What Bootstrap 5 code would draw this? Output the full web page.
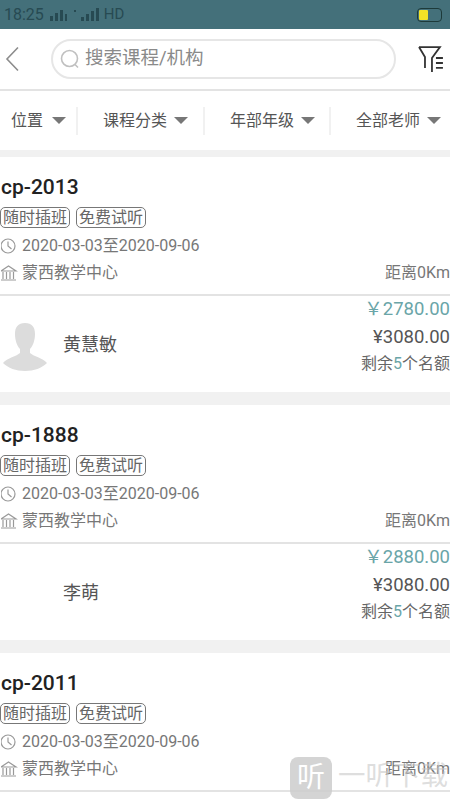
<!DOCTYPE html>
<html lang="zh">

<head>
    <meta charset="UTF-8">
    <meta name="viewport" content="width=device-width, initial-scale=1.0">
    <title>课程列表</title>
    <link href="https://cdn.jsdelivr.net/npm/bootstrap@5.3.0/dist/css/bootstrap.min.css" rel="stylesheet">
    <style>
        html, body {
            height: 800px;
            overflow: hidden;
        }

        body {
            background-color: #f1f1f1;
            color: #444;
            font-family: Roboto, "Noto Sans CJK SC", sans-serif;
        }

        .status-bar {
            height: 29px;
            background-color: #44707a;
            color: #274a52;
            font-size: 16px;
            padding: 0 8px 0 4px;
        }

        .status-hd { font-size: 15px; }

        .battery {
            width: 25px;
            height: 14px;
            border: 1.5px solid #1d3a3a;
            border-radius: 4px;
            padding: 1px;
        }

        .battery-fill {
            width: 9px;
            height: 100%;
            background-color: #f2e227;
            border-radius: 1px;
        }

        .top-bar {
            height: 62px;
            background-color: #fff;
            border-bottom: 2px solid #e3e3e3;
            padding: 0 5px 0 5px;
        }

        .search-box {
            width: 346px;
            height: 40px;
            margin-left: 32px;
            margin-right: 21px;
            border: 2px solid #e6e6e6;
            border-radius: 20px;
            padding-left: 6px;
            color: #8a8a8a;
            font-size: 18.5px;
        }

        .filter-bar {
            height: 59px;
            background-color: #fff;
            margin-bottom: 7px;
            font-size: 16px;
            color: #555;
        }

        .filter-item {
            height: 28px;
            border-right: 2px solid #f1f1f1;
            gap: 7px;
            padding-left: 25px;
            white-space: nowrap;
        }

        .filter-item:last-child { border-right: 0; }

        .filter-place { width: 78px; padding-left: 11px; gap: 9px; }
        .filter-type { width: 127px; }
        .filter-grade { width: 126px; }
        .filter-teacher { width: 119px; }

        .caret-down {
            width: 0;
            height: 0;
            border-left: 7px solid transparent;
            border-right: 7px solid transparent;
            border-top: 7px solid #777;
        }

        .course-item {
            height: 235px;
            background-color: #fff;
            margin-bottom: 13px;
        }

        .course-top {
            height: 139px;
            border-bottom: 2px solid #e3e3e3;
            padding: 17px 0 0 1px;
        }

        .course-name {
            font-size: 21px;
            font-weight: 500;
            line-height: 27px;
            color: #222;
            margin: 0;
        }

        .tag-row {
            gap: 6px;
            margin-top: 6px;
            margin-left: -1px;
            height: 21px;
        }

        .course-tag {
            border: 1px solid #777;
            border-radius: 5px;
            font-size: 16px;
            line-height: 19px;
            padding: 0 2px;
            color: #666;
        }

        .info-row {
            height: 27px;
            font-size: 16px;
            color: #777;
            gap: 4px;
        }

        .info-row.first-info { margin-top: 4px; }

        .distance { margin-left: auto; }

        .course-bottom {
            height: 96px;
        }

        .avatar-slot {
            width: 63px;
            padding-left: 3px;
            height: 48px;
            margin-top: 6px;
        }

        .teacher-name {
            font-size: 18px;
            color: #555;
        }

        .price-col {
            margin-left: auto;
            text-align: right;
            height: 96px;
        }

        .price-now {
            font-size: 18.5px;
            line-height: 26px;
            color: #6aa5a8;
        }

        .price-old {
            font-size: 18.5px;
            line-height: 30px;
            color: #555;
        }

        .seats {
            font-size: 16px;
            line-height: 24px;
            color: #666;
        }

        .seats span { color: #6aa5a8; }

        .watermark {
            position: absolute;
            left: 290px;
            top: 757px;
            gap: 6px;
            pointer-events: none;
        }

        .watermark-logo {
            width: 42px;
            height: 42px;
            background-color: rgba(205, 205, 205, 0.85);
            border-radius: 8px;
            color: #fff;
            font-size: 28px;
            line-height: 1;
        }

        .watermark-text {
            font-size: 27.5px;
            line-height: 38px;
            color: rgba(200, 200, 200, 0.6);
            white-space: nowrap;
        }
    </style>
</head>

<body>

    <!-- status bar -->
    <div class="status-bar d-flex align-items-center">
        <span>18:25</span>
        <svg class="ms-1" width="22" height="15" viewBox="0 0 22 15" fill="#274a52">
            <rect x="2" y="9" width="3" height="5"/><rect x="7" y="6" width="3" height="8"/><rect x="12" y="3" width="3" height="11"/><rect x="17" y="7" width="2" height="7"/>
        </svg>
        <svg class="ms-1" width="30" height="15" viewBox="0 0 30 15" fill="#274a52">
            <rect x="0" y="3" width="2" height="2"/><rect x="7" y="10" width="3" height="4"/><rect x="12" y="7" width="3" height="7"/><rect x="17" y="4" width="3" height="10"/><rect x="22" y="1" width="3" height="13"/>
        </svg>
        <span class="status-hd">HD</span>
        <div class="battery ms-auto"><div class="battery-fill"></div></div>
    </div>

    <!-- header -->
    <div class="top-bar d-flex align-items-center">
        <svg width="14" height="26" viewBox="0 0 14 26" fill="none" stroke="#8c8c8c" stroke-width="1.6">
            <path d="M13 1.5 2 13l11 11.5"/>
        </svg>
        <div class="search-box d-flex align-items-center">
            <svg class="me-1" width="22" height="22" viewBox="0 0 22 22" fill="none" stroke="#c0c0c0" stroke-width="1.6">
                <circle cx="10.5" cy="10.5" r="8"/><path d="m16 16.500 3 3"/>
            </svg>
            <span>搜索课程/机构</span>
        </div>
        <svg width="28" height="30" viewBox="0 0 28 30" fill="none" stroke="#333" stroke-width="1.8">
            <path d="M2 3h21l-8 11v14M2 3l6 10v11"/>
            <path d="M19 14h7M19 19h7M19 24h7"/>
        </svg>
    </div>

    <!-- filters -->
    <div class="filter-bar d-flex align-items-center">
        <div class="filter-item filter-place d-flex align-items-center">位置 <i class="caret-down"></i></div>
        <div class="filter-item filter-type d-flex align-items-center">课程分类 <i class="caret-down"></i></div>
        <div class="filter-item filter-grade d-flex align-items-center">年部年级 <i class="caret-down"></i></div>
        <div class="filter-item filter-teacher d-flex align-items-center">全部老师 <i class="caret-down"></i></div>
    </div>

    <!-- courses -->
    <div id="course-list"></div>

    <!-- watermark -->
    <div class="watermark d-flex">
        <div class="watermark-logo d-flex align-items-center justify-content-center">听</div>
        <div class="watermark-text">一听下载</div>
    </div>

    <script src="https://cdn.jsdelivr.net/npm/bootstrap@5.3.0/dist/js/bootstrap.bundle.min.js"></script>
    <script>
        const courses = [
            { name: 'cp-2013', teacher: '黄慧敏', price: '2780.00', avatar: true },
            { name: 'cp-1888', teacher: '李萌', price: '2880.00', avatar: false },
            { name: 'cp-2011', teacher: '', price: '', avatar: false }
        ];

        const clockIcon = '<svg width="17" height="17" viewBox="0 0 17 17" fill="none" stroke="#999" stroke-width="1.2"><circle cx="7" cy="9" r="7"/><path d="M7 4.500V9l3.500 3"/></svg>';
        const bankIcon = '<svg width="17" height="17" viewBox="0 0 17 17" fill="none" stroke="#999" stroke-width="1.2"><path d="M0 7 7.500 2 15 7zM2 8v7M5.500 8v7M9 8v7M12.500 8v7M0 16h15"/></svg>';
        const avatarIcon = '<svg width="44" height="48" viewBox="0 0 44 48" fill="#dcdcdc"><path d="M22 0c7 0 10 4 10 11 0 6-2 12-5 15v4c3 3 13 5 17 10-5 5-13 8-22 8S5 45 0 40c4-5 14-7 17-10v-4c-3-3-5-9-5-15C12 4 15 0 22 0z"/></svg>';

        document.getElementById('course-list').innerHTML = courses.map(c => `
            <div class="course-item">
                <div class="course-top">
                    <h5 class="course-name">${c.name}</h5>
                    <div class="tag-row d-flex">
                        <span class="course-tag">随时插班</span>
                        <span class="course-tag">免费试听</span>
                    </div>
                    <div class="info-row first-info d-flex align-items-center">${clockIcon}<span>2020-03-03至2020-09-06</span></div>
                    <div class="info-row d-flex align-items-center">${bankIcon}<span>蒙西教学中心</span><span class="distance">距离0Km</span></div>
                </div>
                ${c.price ? `<div class="course-bottom d-flex align-items-center">
                    <div class="avatar-slot">${c.avatar ? avatarIcon : ''}</div>
                    <div class="teacher-name">${c.teacher}</div>
                    <div class="price-col">
                        <div class="price-now">￥${c.price}</div>
                        <div class="price-old">¥3080.00</div>
                        <div class="seats">剩余<span>5</span>个名额</div>
                    </div>
                </div>` : ''}
            </div>`).join('');
    </script>
</body>

</html>
